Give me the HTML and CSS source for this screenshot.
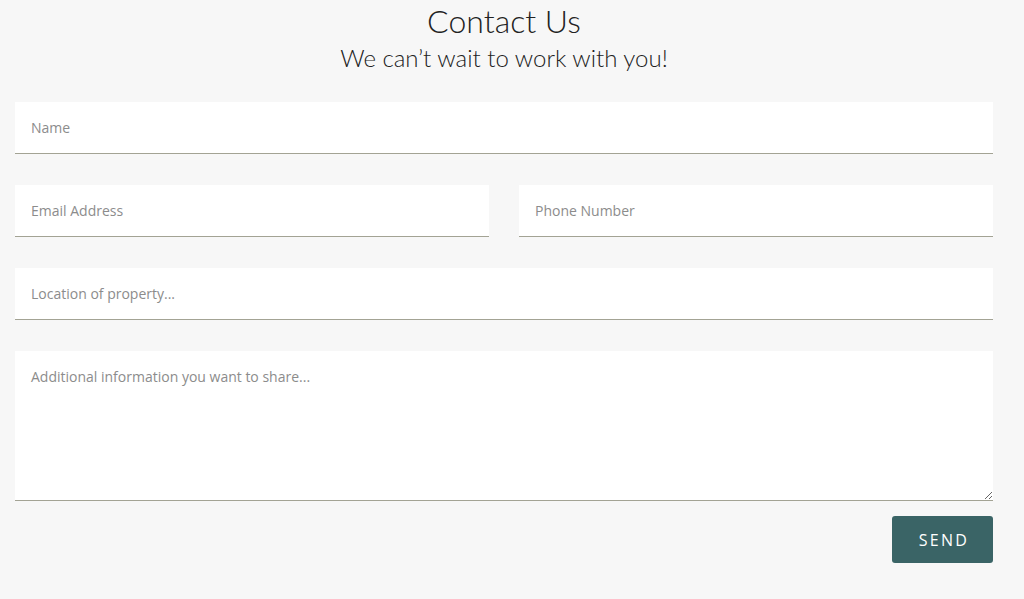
FILE: index.html
```html
<!DOCTYPE html>
<html>
<head>
<meta charset="utf-8">
<link rel="stylesheet" href="styles.css">
</head>
<body>
<div class="page">
  <header class="head">
    <h1 class="title">Contact Us</h1>
    <h2 class="subtitle">We can’t wait to work with you!</h2>
  </header>
  <form class="form">
    <input class="field" type="text" placeholder="Name">
    <div class="row">
      <input class="field" type="text" placeholder="Email Address">
      <input class="field" type="text" placeholder="Phone Number">
    </div>
    <input class="field" type="text" placeholder="Location of property...">
    <textarea class="field area" placeholder="Additional information you want to share..."></textarea>
    <div class="actions">
      <button class="send" type="button">SEND</button>
    </div>
  </form>
</div>
</body>
</html>
```
FILE: styles.css
```css
html, body {
  margin: 0;
  padding: 0;
  background: #f7f7f7;
}
.page {
  width: 978px;
  margin-left: 15px;
  font-family: "Open Sans", sans-serif;
}
.head {
  text-align: center;
  color: #222;
}
.title {
  margin: 0;
  padding-top: 2px;
  font-family: Lato, sans-serif;
  font-weight: 300;
  font-size: 32px;
  line-height: 37px;
}
.subtitle {
  margin: 0;
  font-family: Lato, sans-serif;
  font-weight: 300;
  font-size: 24px;
  line-height: 38px;
}
.form {
  display: flex;
  flex-direction: column;
  gap: 31px;
  margin-top: 25px;
}
.row {
  display: grid;
  grid-template-columns: 1fr 1fr;
  column-gap: 30px;
}
.field {
  box-sizing: border-box;
  width: 100%;
  height: 52px;
  border: none;
  border-bottom: 1.5px solid #a3a394;
  background: #fff;
  padding: 0 16px;
  font-family: "Open Sans", sans-serif;
  font-size: 14px;
  color: #333;
  outline: none;
  margin: 0;
}
.field::placeholder {
  color: #8c8c8c;
}
.area {
  height: 150px;
  padding-top: 16px;
  resize: vertical;
  display: block;
}
.actions {
  display: flex;
  justify-content: flex-end;
  margin-top: -16px;
}
.send {
  width: 101px;
  height: 47px;
  background: #3a6466;
  color: #fff;
  border: none;
  border-radius: 3px;
  font-family: "Open Sans", sans-serif;
  font-size: 16px;
  letter-spacing: 2.3px;
  padding: 0 0 0 3px;
}
```
